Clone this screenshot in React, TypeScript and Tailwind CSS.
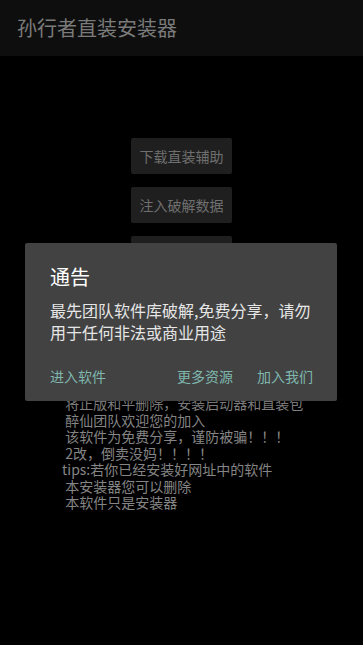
import React from "react";

const cjk = { fontFamily: '"Noto Sans CJK SC", "Noto Sans", sans-serif' };

export default function App() {
  const lines = [
    " 将正版和平删除，安装启动器和直装包",
    " 醉仙团队欢迎您的加入",
    " 该软件为免费分享，谨防被骗！！！",
    " 2改，倒卖没妈！！！！",
    "tips:若你已经安装好网址中的软件",
    " 本安装器您可以删除",
    " 本软件只是安装器",
  ];
  return (
    <div className="relative h-[645px] w-[363px] overflow-hidden bg-black" style={cjk}>
      <div className="flex h-[56px] items-center bg-[#0e0e0e] pl-[17px]">
        <span className="text-[20px] leading-none text-[#7b7b7b]">孙行者直装安装器</span>
      </div>
      <div className="flex flex-col items-center gap-[13px] pt-[82px]">
        <div className="flex h-[36px] w-[101px] items-center justify-center rounded-[2px] bg-[#1f1f1f] text-[14px] text-[#6f6f6f]">下载直装辅助</div>
        <div className="flex h-[36px] w-[101px] items-center justify-center rounded-[2px] bg-[#1f1f1f] text-[14px] text-[#6f6f6f]">注入破解数据</div>
        <div className="flex h-[36px] w-[101px] items-center justify-center rounded-[2px] bg-[#1f1f1f] text-[14px] text-[#6f6f6f]">下载游戏</div>
      </div>
      <div className="pl-[62px] pt-[123px] text-[14px] leading-[16.5px] text-[#858585] whitespace-pre">
        {lines.map((l, i) => (
          <div key={i} className="h-[16.5px] overflow-visible">{l}</div>
        ))}
      </div>
      <div className="absolute left-[25px] top-[243px] h-[158px] w-[312px] rounded-[2px] bg-[#424242] shadow-lg">
        <div className="pl-[25px] pt-[20px] text-[20px] leading-[28px] text-white">通告</div>
        <div className="mt-[8px] px-[25px] text-[16px] leading-[22px] text-[#e6e6e6]">
          最先团队软件库破解,免费分享，请勿用于任何非法或商业用途
        </div>
        <div className="mt-[23px] flex items-center text-[14px] leading-[20px] text-[#7fb7ae]">
          <span className="ml-[25px]">进入软件</span>
          <span className="ml-auto">更多资源</span>
          <span className="ml-[24px] mr-[24px]">加入我们</span>
        </div>
      </div>
    </div>
  );
}
